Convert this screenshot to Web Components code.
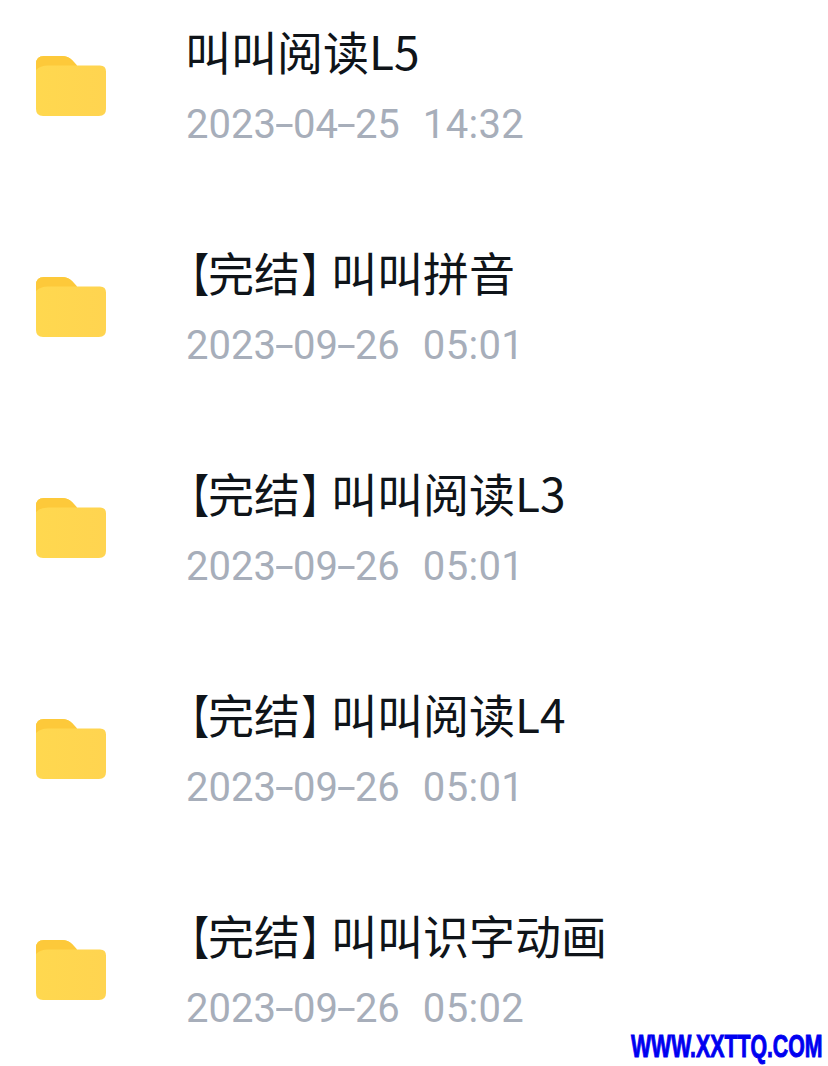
<!DOCTYPE html>
<html lang="zh"><head><meta charset="utf-8">
<style>
html,body{margin:0;background:#fff}
body{width:828px;height:1066px;overflow:hidden;position:relative}
</style></head><body>
<file-list>
<file-row name="叫叫阅读L5" date="2023-04-25" time="14:32"></file-row>
<file-row name="【完结】叫叫拼音" date="2023-09-26" time="05:01"></file-row>
<file-row name="【完结】叫叫阅读L3" date="2023-09-26" time="05:01"></file-row>
<file-row name="【完结】叫叫阅读L4" date="2023-09-26" time="05:01"></file-row>
<file-row name="【完结】叫叫识字动画" date="2023-09-26" time="05:02"></file-row>
</file-list>
<water-mark>WWW.XXTTQ.COM</water-mark>
<script>
class FileList extends HTMLElement{constructor(){super();this.attachShadow({mode:'open'}).innerHTML=`<style>:host{display:flex;flex-direction:column;padding-top:20px}</style><slot></slot>`}}
class FolderIcon extends HTMLElement{constructor(){super();this.attachShadow({mode:'open'}).innerHTML=`<style>:host{display:block;width:70px;height:60px;flex:none}svg{display:block}</style>
<svg width="70" height="60" viewBox="0 0 70 60"><defs><linearGradient id="g" x1="0" y1="0" x2="1" y2="0"><stop offset="0" stop-color="#ffd84f"/><stop offset="1" stop-color="#ffd450"/></linearGradient></defs><path d="M0 8Q0 0 8 0H26Q32 0 36 4L41 9.500H64Q70 9.500 70 15.500V53Q70 60 63 60H7Q0 60 0 53Z" fill="url(#g)"/><path d="M0 8Q0 0 8 0H26Q32 0 36 4L41 9.500H12Q4 9.500 0 14Z" fill="#fdc93a"/></svg>`}}
class FileRow extends HTMLElement{constructor(){super();const r=this.attachShadow({mode:'open'});
r.innerHTML=`<style>
:host{display:flex;padding:0 0 92px 36px;align-items:flex-start}
:host(:last-child){padding-bottom:33px}
folder-icon{margin-top:36px}
.t{margin-left:81px;display:flex;flex-direction:column;gap:21px}
.n{font:46px/60px "Noto Sans CJK SC",sans-serif;color:#0f1419;font-feature-settings:"halt";white-space:pre;margin-left:-2px}
.o,.c{display:inline-block}
.o{transform-origin:18px 50%;transform:translateX(2px) scaleX(.8)}
.c{margin-right:8px;transform-origin:2px 50%;transform:translateX(1px) scaleX(.8)}
.d{font:40px/48px Roboto,sans-serif;color:#a7aeba;white-space:pre;margin-left:-1px}
.h{display:inline-block;width:17px;text-align:center;transform:scaleX(1.7)}
.gap{margin-left:23px;letter-spacing:.3px}
</style><folder-icon></folder-icon><div class="t"><div class="n"></div><div class="d"><span class="a"></span><span class="gap"></span></div></div>`;
r.querySelector('.n').innerHTML=this.getAttribute('name').replace('【','<span class="o">【</span>').replace('】','<span class="c">】</span>');
r.querySelector('.a').innerHTML=this.getAttribute('date').replace(/-/g,'<span class="h">-</span>');
r.querySelector('.gap').textContent=this.getAttribute('time');}}
class WaterMark extends HTMLElement{constructor(){super();this.attachShadow({mode:'open'}).innerHTML=`<style>:host{position:absolute;left:631px;top:1030px;display:block;font:bold 32px/32px "Liberation Sans",sans-serif;color:#0000f0;transform-origin:0 0;transform:scaleX(.665);white-space:pre;-webkit-text-stroke:1px #0000f0}</style><slot></slot>`}}
customElements.define('folder-icon',FolderIcon);
customElements.define('file-row',FileRow);
customElements.define('file-list',FileList);
customElements.define('water-mark',WaterMark);
</script>
</body></html>
